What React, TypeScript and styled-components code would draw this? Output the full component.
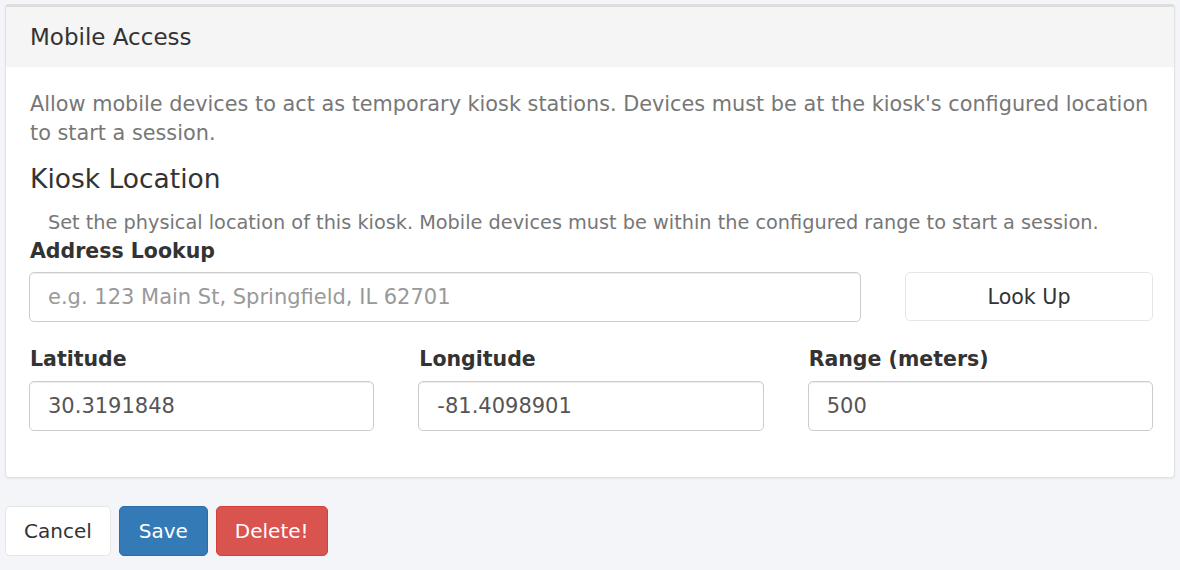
import React, { useState } from 'react';
import styled, { createGlobalStyle } from 'styled-components';

const GlobalStyle = createGlobalStyle`
  html, body {
    margin: 0;
    padding: 0;
    background-color: #f4f5f9;
    font-family: 'DejaVu Sans', Verdana, sans-serif;
    color: #333333;
  }
  * {
    box-sizing: border-box;
  }
`;

const Page = styled.div`
  padding: 4px 5px 14px 5px;
`;

const Panel = styled.section`
  background-color: #ffffff;
  border: 1px solid #e1e1e1;
  border-top: 3px solid #dddddd;
  border-radius: 4px;
  box-shadow: 0 1px 2px rgba(0, 0, 0, 0.05);
  margin-bottom: 28px;
  overflow: hidden;
`;

const PanelHeading = styled.div`
  background-color: #f5f5f5;
  padding: 0 24px;
  height: 60px;
  display: flex;
  align-items: center;
  font-size: 23px;
  color: #333333;
`;

const PanelBody = styled.div`
  padding: 23px 21px 46px 23px;
`;

const Intro = styled.p`
  margin: 0 0 17px 1px;
  font-size: 20.8px;
  line-height: 28.6px;
  color: #777777;
`;

const SectionTitle = styled.h4`
  margin: 0 0 16px 1px;
  font-size: 26.5px;
  font-weight: 400;
  line-height: 30px;
  color: #333333;
`;

const HelpText = styled.p`
  margin: 0 0 1px 19px;
  font-size: 19.3px;
  line-height: 25.7px;
  color: #777777;
`;

const Label = styled.label`
  display: block;
  margin: 0 0 7px 1px;
  font-size: 20.5px;
  font-weight: 700;
  line-height: 28.6px;
  color: #333333;
`;

const LookupRow = styled.div`
  display: grid;
  grid-template-columns: 1fr 248px;
  gap: 44px;
  margin-bottom: 23px;
`;

const CoordsRow = styled.div`
  display: grid;
  grid-template-columns: repeat(3, 1fr);
  gap: 44px;
`;

const Field = styled.div`
  display: flex;
  flex-direction: column;
`;

const TextInput = styled.input`
  width: 100%;
  height: 50px;
  padding: 0 18px;
  font-family: inherit;
  font-size: 21px;
  color: #555555;
  background-color: #ffffff;
  border: 1px solid #cccccc;
  border-radius: 5px;
  box-shadow: inset 0 1px 1px rgba(0, 0, 0, 0.075);
  outline: none;

  &::placeholder {
    color: #999999;
  }
`;

const Button = styled.button<{ $variant?: 'default' | 'primary' | 'danger' }>`
  height: 50px;
  padding: 0 ${(p) => (p.$variant === 'primary' ? '19px' : '18px')};
  font-family: inherit;
  font-size: 20px;
  border-radius: 5px;
  cursor: pointer;
  border: 1px solid
    ${(p) =>
      p.$variant === 'primary' ? '#2e6da4' : p.$variant === 'danger' ? '#d43f3a' : '#e6e6e6'};
  background-color: ${(p) =>
    p.$variant === 'primary' ? '#337ab7' : p.$variant === 'danger' ? '#d9534f' : '#ffffff'};
  color: ${(p) => (p.$variant === 'primary' || p.$variant === 'danger' ? '#ffffff' : '#333333')};
`;

const LookupButton = styled(Button)`
  width: 100%;
  height: 49px;
  font-size: 20.6px;
`;

const Actions = styled.div`
  display: flex;
  gap: 8px;
  align-items: center;
`;

export default function App() {
  const [address, setAddress] = useState('');
  const [lat, setLat] = useState('30.3191848');
  const [lng, setLng] = useState('-81.4098901');
  const [range, setRange] = useState('500');

  return (
    <Page>
      <GlobalStyle />
      <Panel>
        <PanelHeading>Mobile Access</PanelHeading>
        <PanelBody>
          <Intro>
            Allow mobile devices to act as temporary kiosk stations. Devices must be at the
            kiosk's configured location to start a session.
          </Intro>
          <SectionTitle>Kiosk Location</SectionTitle>
          <HelpText>
            Set the physical location of this kiosk. Mobile devices must be within the configured
            range to start a session.
          </HelpText>
          <Label htmlFor="address">Address Lookup</Label>
          <LookupRow>
            <TextInput
              id="address"
              placeholder="e.g. 123 Main St, Springfield, IL 62701"
              value={address}
              onChange={(e: React.ChangeEvent<HTMLInputElement>) => setAddress(e.target.value)}
            />
            <LookupButton type="button">Look Up</LookupButton>
          </LookupRow>
          <CoordsRow>
            <Field>
              <Label htmlFor="lat">Latitude</Label>
              <TextInput
                id="lat"
                value={lat}
                onChange={(e: React.ChangeEvent<HTMLInputElement>) => setLat(e.target.value)}
              />
            </Field>
            <Field>
              <Label htmlFor="lng">Longitude</Label>
              <TextInput
                id="lng"
                value={lng}
                onChange={(e: React.ChangeEvent<HTMLInputElement>) => setLng(e.target.value)}
              />
            </Field>
            <Field>
              <Label htmlFor="range">Range (meters)</Label>
              <TextInput
                id="range"
                value={range}
                onChange={(e: React.ChangeEvent<HTMLInputElement>) => setRange(e.target.value)}
              />
            </Field>
          </CoordsRow>
        </PanelBody>
      </Panel>
      <Actions>
        <Button type="button">Cancel</Button>
        <Button type="button" $variant="primary">
          Save
        </Button>
        <Button type="button" $variant="danger">
          Delete!
        </Button>
      </Actions>
    </Page>
  );
}
